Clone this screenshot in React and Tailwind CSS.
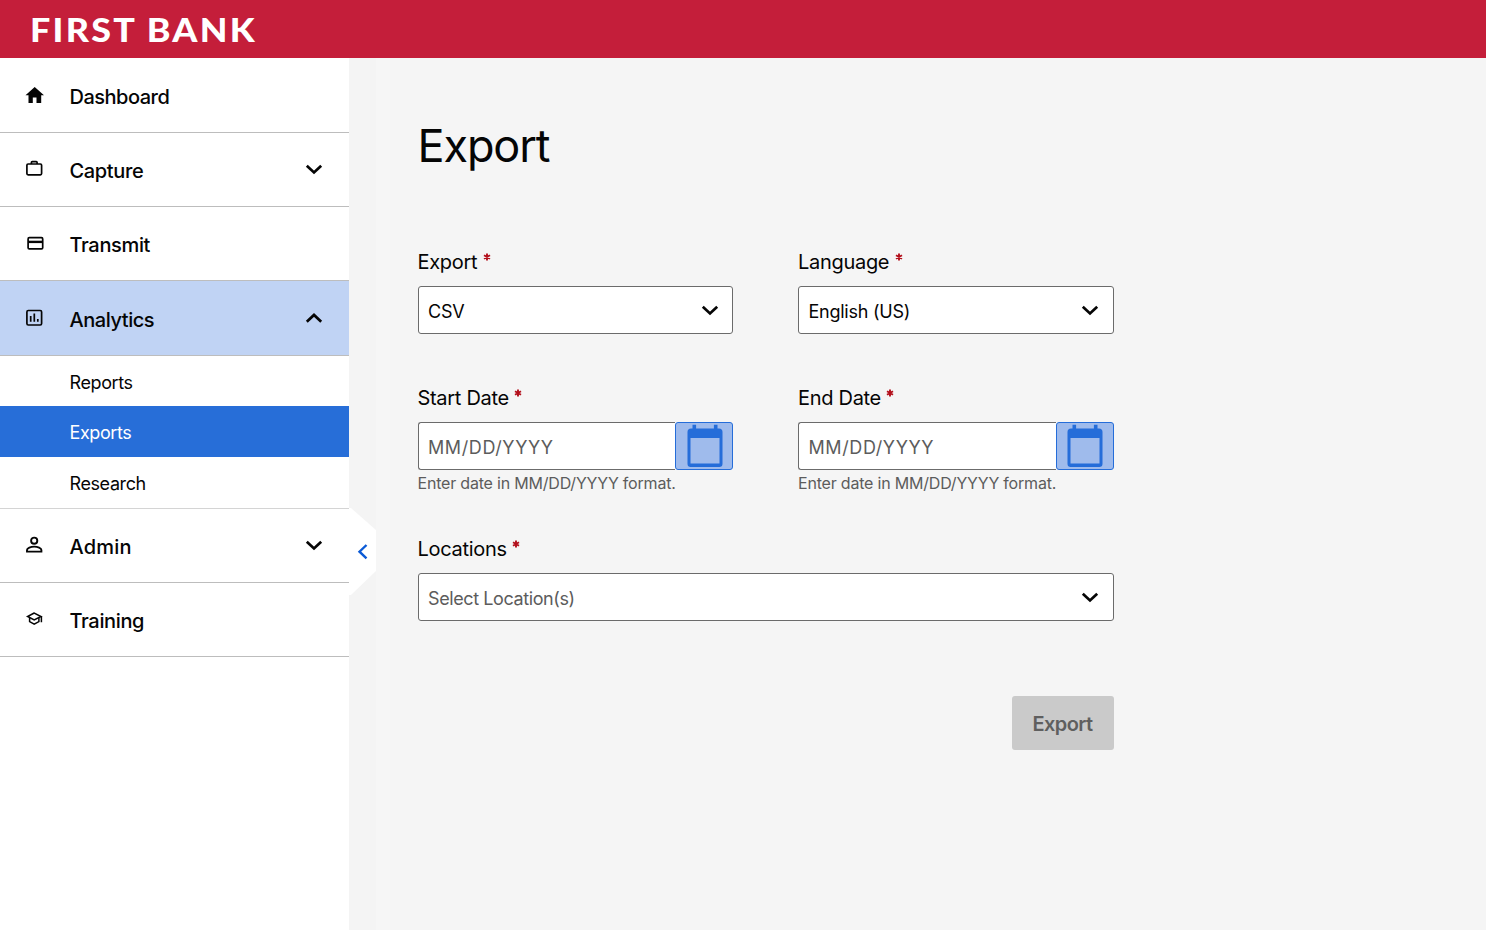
import { useState } from 'react';

/* ── Icons ──────────────────────────────────────────────────── */
function Icon({ children }) {
  return (
    <svg width="22" height="22" viewBox="0 0 22 22" fill="none" stroke="currentColor" strokeWidth="1.7" className="shrink-0">
      {children}
    </svg>
  );
}

const icons = {
  home: (
    <Icon>
      <path d="M8.8 19v-5.4h3.7V19h4.7v-7.8H20L10.700 3 1.500 11.200h3V19z" fill="currentColor" stroke="none" />
    </Icon>
  ),
  briefcase: (
    <Icon>
      <rect x="2.9" y="6" width="14.7" height="10.8" rx="1.2" />
      <path d="M7.4 6V4.4q0-.8.8-.8h4.1q.8 0 .8.8V6" />
    </Icon>
  ),
  card: (
    <Icon>
      <rect x="4.1" y="4.7" width="14.6" height="11.2" rx="1.2" />
      <path d="M4.1 8.9h14.6" strokeWidth="2.4" />
    </Icon>
  ),
  chart: (
    <Icon>
      <rect x="2.9" y="3.5" width="14.7" height="14.5" rx="1.4" />
      <path d="M6.7 9v5.8M10.3 6.6v8.2M13.8 12v2.8" />
    </Icon>
  ),
  person: (
    <Icon>
      <circle cx="10.2" cy="6.7" r="3.1" strokeWidth="1.9" />
      <path d="M3 17.6V16c0-2.1 3.8-3.4 7.2-3.4s7.2 1.3 7.2 3.4v1.6z" strokeWidth="1.9" />
    </Icon>
  ),
  cap: (
    <Icon>
      <path d="M10.2 4 3.6 7.5l6.6 3.5L17 7.5z" strokeWidth="1.5" />
      <path d="M5.6 8.8v3.8l4.6 2.5 4.7-2.5V8.8M17.4 7.5v5.7" strokeWidth="1.5" />
    </Icon>
  ),
};

function Chevron({ up }) {
  return (
    <svg width="18" height="12" viewBox="0 0 18 12" fill="none" stroke="currentColor" strokeWidth="2.7" className="shrink-0">
      <path d={up ? 'M1.8 9.7 9 2.9l7.2 6.8' : 'M1.8 2.7 9 9.5l7.2-6.8'} />
    </svg>
  );
}

function CalendarIcon() {
  return (
    <svg width="36" height="44" viewBox="0 0 36 44" fill="#256dd9" className="mb-px ml-px">
      <path fillRule="evenodd" d="M5.5.8h3.6v3.8h17.8V.8h3.6v3.8H32q3.5 0 3.5 3.5v31.700q0 3.200-3.200 3.200H3.700Q.5 43 .5 39.800V8.100q0-3.500 3.500-3.500h1.500zM3.500 14v25.500h29V14z" />
    </svg>
  );
}

/* ── Sidebar ────────────────────────────────────────────────── */
const NAV = [
  { id: 'dashboard', label: 'Dashboard', icon: icons.home, tracking: 'tracking-[-0.5px]' },
  { id: 'capture', label: 'Capture', icon: icons.briefcase, tracking: 'tracking-[-0.35px]', children: [] },
  { id: 'transmit', label: 'Transmit', icon: icons.card, tracking: 'tracking-[-0.35px]' },
  { id: 'analytics', label: 'Analytics', icon: icons.chart, tracking: 'tracking-[-0.45px]', children: ['Reports', 'Exports', 'Research'] },
  { id: 'admin', label: 'Admin', icon: icons.person, tracking: 'tracking-[0.2px]', children: [] },
  { id: 'training', label: 'Training', icon: icons.cap, tracking: 'tracking-[-0.35px]' },
];

function NavItem({ item, open, page, onToggle, onSelect }) {
  return (
    <li>
      <button
        onClick={onToggle}
        className={`flex h-[74.35px] w-full items-center border-b border-[#bdbdbd] pl-6 pr-[26px] ${open ? 'bg-[#c0d3f4]' : 'bg-white'}`}
      >
        {item.icon}
        <span className={`ml-[23.5px] mt-[3px] flex-1 text-left text-[20px] font-medium leading-7 ${item.tracking}`}>{item.label}</span>
        {item.children && <Chevron up={open} />}
      </button>
      {open && item.children?.length > 0 && (
        <ul className="border-b border-[#d4d4d4]">
          {item.children.map(child => (
            <li key={child}>
              <button
                onClick={() => onSelect(child)}
                className={`flex h-[50.7px] w-full items-center pl-[69.5px] pt-0.5 text-[18px] tracking-[-0.4px] ${page === child ? 'bg-[#276ed8] text-white' : 'bg-white'}`}
              >
                {child}
              </button>
            </li>
          ))}
        </ul>
      )}
    </li>
  );
}

/* ── Form fields ────────────────────────────────────────────── */
function Label({ children }) {
  return (
    <label className="flex h-6 items-center text-[20px] leading-6 tracking-[-0.3px]">
      {children}
      <svg width="8" height="8" viewBox="0 0 8 8" stroke="#b3101c" strokeWidth="1.9" className="mb-2.5 ml-[5.5px]">
        <path d="M4 .5v7M1 2.2l6 3.6M7 2.2 1 5.8" />
      </svg>
    </label>
  );
}

function Select({ label, value, muted }) {
  return (
    <div>
      <Label>{label}</Label>
      <button className="mt-3 flex h-[48.4px] w-full items-center justify-between rounded-[3px] border border-[#6b6b6b] bg-white pl-[9.5px] pr-[13.5px] text-[18px]">
        <span className={`mt-[3px] ${muted ? 'tracking-[-0.4px] text-[#5c5c5c]' : 'tracking-[-0.25px]'}`}>{value}</span>
        <Chevron />
      </button>
    </div>
  );
}

function DateField({ label }) {
  return (
    <div>
      <Label>{label}</Label>
      <div className="mt-3 flex h-[48.4px]">
        <input
          placeholder="MM/DD/YYYY"
          className="min-w-0 flex-1 rounded-l-[3px] border border-r-0 border-[#6b6b6b] bg-white pl-[9.5px] pt-[3px] text-[18px] tracking-[0.6px] outline-none placeholder:text-[#5c5c5c]"
        />
        <button className="flex w-[58px] items-center justify-center rounded-[3px] border border-[#256dd9] bg-[#9fbbec]">
          <CalendarIcon />
        </button>
      </div>
      <p className="mt-[3px] text-[16px] leading-5 tracking-[-0.2px] text-[#5c5c5c]">Enter date in MM/DD/YYYY format.</p>
    </div>
  );
}

export default function App() {
  const [openId, setOpenId] = useState('analytics');
  const [page, setPage] = useState('Exports');

  return (
    <div className="flex h-screen flex-col overflow-hidden bg-[#f5f5f5] font-['Inter',sans-serif] text-[#050505]">
      <header className="flex h-[58px] shrink-0 items-center bg-[#c41e3a] pl-[29.5px]">
        <span className="mt-px origin-left scale-x-[1.12] whitespace-nowrap font-['Lato',sans-serif] text-[32px] font-black leading-none tracking-[2px] text-white">
          FIRST BANK
        </span>
      </header>

      <div className="flex min-h-0 flex-1">
        <nav className="relative w-[349px] shrink-0 bg-white pt-[0.35px]">
          <ul>
            {NAV.map(item => (
              <NavItem
                key={item.id}
                item={item}
                open={openId === item.id}
                page={page}
                onToggle={() => setOpenId(openId === item.id ? null : item.id)}
                onSelect={setPage}
              />
            ))}
          </ul>
          {/* collapse handle, hangs over the content area */}
          <button className="absolute left-full top-[449px] z-10">
            <svg width="27" height="89" viewBox="0 0 27 89" fill="none">
              <path d="M0 1h2l25 22v41L2 88H0z" fill="#fff" />
              <path d="M17.5 38l-7 6.7 7 6.7" stroke="#0b5ad6" strokeWidth="2.4" />
            </svg>
          </button>
        </nav>
        <div className="w-[27px] shrink-0 bg-[#f4f4f4]" />
        <div className="w-[14px] shrink-0 bg-[#f6f6f6]" />

        <main className="pl-[27.5px]">
          <h1 className="mt-[60px] text-[45px] leading-[56px] tracking-[-1.1px]">Export</h1>
          <form className="mt-[76px] w-[696px]" onSubmit={e => e.preventDefault()}>
            <div className="grid grid-cols-2 gap-x-[65px]">
              <Select label="Export" value="CSV" />
              <Select label="Language" value="English (US)" />
            </div>
            <div className="mt-[51.5px] grid grid-cols-2 gap-x-[65px]">
              <DateField label="Start Date" />
              <DateField label="End Date" />
            </div>
            <div className="mt-[43.5px]">
              <Select label="Locations" value="Select Location(s)" muted />
            </div>
            <div className="mt-[74.5px] flex justify-end">
              <button disabled className="h-[54px] w-[102px] rounded-[3px] bg-[#cacaca] pt-0.5 text-[20px] font-semibold tracking-[-0.6px] text-[#5f5f5f]">
                Export
              </button>
            </div>
          </form>
        </main>
      </div>
    </div>
  );
}
